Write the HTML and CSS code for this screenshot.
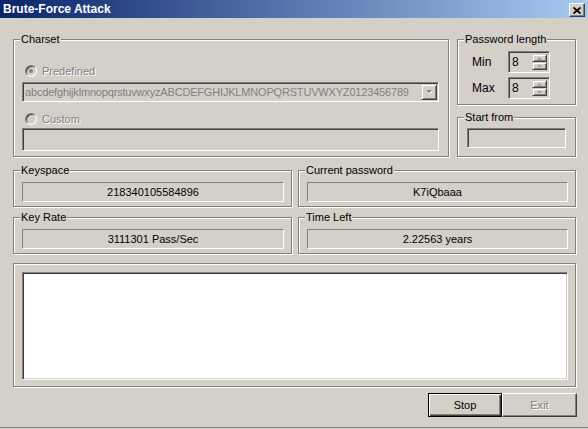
FILE: index.html
```html
<!DOCTYPE html>
<html lang="en">
<head>
  <meta charset="UTF-8" />
  <title>Brute-Force Attack</title>
  <link rel="stylesheet" href="styles.css">
</head>
<body>
  <div class="window">
    <div class="titlebar">
      <span class="title">Brute-Force Attack</span>
      <span class="close-btn">
        <svg width="8" height="7" viewBox="0 0 8 7"><path d="M0.5 0.5 L7.5 6.5 M7.5 0.5 L0.5 6.5" stroke="#000" stroke-width="1.8" fill="none"/></svg>
      </span>
    </div>

    <div class="content">
      <div class="top-row">
        <div class="group charset">
          <span class="legend">Charset</span>
          <div class="radio-row">
            <span class="radio checked"></span>
            <span class="off">Predefined</span>
          </div>
          <div class="combo">
            <span class="combo-text">abcdefghijklmnopqrstuvwxyzABCDEFGHIJKLMNOPQRSTUVWXYZ0123456789</span>
            <span class="drop-btn">
              <svg width="7" height="5" viewBox="0 0 7 5"><polygon points="1,1 7,1 4,4" fill="#fff"/><polygon points="0,0 6,0 3,3" fill="#808080"/></svg>
            </span>
          </div>
          <div class="radio-row second">
            <span class="radio"></span>
            <span class="off">Custom</span>
          </div>
          <div class="edit charset-edit"></div>
        </div>

        <div class="side">
          <div class="group pwlen">
            <span class="legend">Password length</span>
            <div class="spin-row">
              <span class="spin-label">Min</span>
              <div class="edit spin">
                <span class="spin-val">8</span>
                <span class="spin-btns">
                  <span class="spin-btn"><svg width="5" height="3" viewBox="0 0 5 3"><polygon points="2.5,0 5,3 0,3" fill="#a0a0a0"/></svg></span>
                  <span class="spin-btn"><svg width="5" height="3" viewBox="0 0 5 3"><polygon points="0,0 5,0 2.5,3" fill="#a0a0a0"/></svg></span>
                </span>
              </div>
            </div>
            <div class="spin-row">
              <span class="spin-label">Max</span>
              <div class="edit spin">
                <span class="spin-val">8</span>
                <span class="spin-btns">
                  <span class="spin-btn"><svg width="5" height="3" viewBox="0 0 5 3"><polygon points="2.5,0 5,3 0,3" fill="#a0a0a0"/></svg></span>
                  <span class="spin-btn"><svg width="5" height="3" viewBox="0 0 5 3"><polygon points="0,0 5,0 2.5,3" fill="#a0a0a0"/></svg></span>
                </span>
              </div>
            </div>
          </div>
          <div class="group start">
            <span class="legend">Start from</span>
            <div class="edit start-edit"></div>
          </div>
        </div>
      </div>

      <div class="stats">
        <div class="group stat">
          <span class="legend">Keyspace</span>
          <div class="static">218340105584896</div>
        </div>
        <div class="group stat">
          <span class="legend">Current password</span>
          <div class="static">K7iQbaaa</div>
        </div>
        <div class="group stat">
          <span class="legend">Key Rate</span>
          <div class="static">3111301 Pass/Sec</div>
        </div>
        <div class="group stat">
          <span class="legend">Time Left</span>
          <div class="static">2.22563 years</div>
        </div>
      </div>

      <div class="group log">
        <div class="listbox"></div>
      </div>

      <div class="buttons">
        <button class="btn default">Stop</button>
        <button class="btn" disabled>Exit</button>
      </div>
    </div>
  </div>
</body>
</html>
```

FILE: styles.css
```css
* { margin: 0; padding: 0; box-sizing: border-box; }
body {
  background: #d4d0c8;
  font-family: 'Liberation Sans', Arial, sans-serif;
  font-size: 11px;
  color: #000;
  width: 588px;
  height: 429px;
  overflow: hidden;
}
.window {
  height: 428px;
  border-bottom: 1px solid #808080;
}
.titlebar {
  height: 18px;
  background: linear-gradient(90deg, #0a246a, #a6caf0);
  display: flex;
  justify-content: space-between;
  align-items: flex-start;
  padding: 0 3px 0 3px;
}
.title {
  color: #fff;
  font-weight: bold;
  font-size: 12px;
  line-height: 18px;
}
.close-btn {
  width: 16px;
  height: 14px;
  margin-top: 3px;
  background: #d4d0c8;
  border: 1px solid;
  border-color: #fff #404040 #404040 #fff;
  box-shadow: inset -1px -1px 0 #808080;
  display: flex;
  align-items: center;
  justify-content: center;
}
.close-btn svg { display: block; }

.content { padding: 21px 12px 0 13px; }

/* etched group box */
.group {
  position: relative;
  border: 1px solid #808080;
  box-shadow: inset 1px 1px 0 #fff, 1px 1px 0 #fff;
}
.legend {
  position: absolute;
  top: -7px;
  left: 6px;
  line-height: 13px;
  padding: 0 1px;
  background: #d4d0c8;
  white-space: nowrap;
}

/* sunken 3d edit */
.edit {
  border: 1px solid;
  border-color: #808080 #fff #fff #808080;
  box-shadow: inset 1px 1px 0 #404040, inset -1px -1px 0 #d4d0c8;
  background: #d4d0c8;
}

.off {
  color: #808080;
  text-shadow: 1px 1px 0 #fff;
}

.top-row {
  display: flex;
  gap: 8px;
}
.charset {
  width: 436px;
  height: 118px;
  padding: 22px 9px 5px 8px;
}
.radio-row {
  height: 18px;
  display: flex;
  align-items: center;
  padding-left: 3px;
}
.radio-row.second { margin-top: 8px; }
.radio {
  width: 12px;
  height: 12px;
  border-radius: 50%;
  border: 1px solid;
  border-color: #808080 #fff #fff #808080;
  box-shadow: inset 1px 1px 0 #404040, inset -1px -1px 0 #d4d0c8;
  background: #d4d0c8;
  margin-right: 5px;
  display: flex;
  align-items: center;
  justify-content: center;
}
.radio.checked::after {
  content: "";
  width: 4px;
  height: 4px;
  border-radius: 50%;
  background: #808080;
}
.combo {
  margin-top: 2px;
  height: 20px;
  border: 1px solid;
  border-color: #808080 #fff #fff #808080;
  box-shadow: inset 1px 1px 0 #404040, inset -1px -1px 0 #d4d0c8;
  padding: 1px 1px 1px 2px;
  display: flex;
  align-items: center;
  justify-content: space-between;
}
.combo-text {
  color: #808080;
  line-height: 16px;
  letter-spacing: -0.18px;
  white-space: nowrap;
}
.drop-btn {
  width: 16px;
  height: 16px;
  border: 1px solid;
  border-color: #d4d0c8 #404040 #404040 #d4d0c8;
  box-shadow: inset 1px 1px 0 #fff, inset -1px -1px 0 #808080;
  display: flex;
  align-items: center;
  justify-content: center;
}
.drop-btn svg { display: block; }
.charset-edit { height: 23px; }

.side {
  width: 119px;
  display: flex;
  flex-direction: column;
  gap: 12px;
}
.pwlen {
  height: 66px;
  padding: 11px 0 5px 14px;
  display: flex;
  flex-direction: column;
  gap: 4px;
}
.spin-row {
  display: flex;
  align-items: center;
  height: 22px;
}
.spin-label { width: 36px; font-size: 12px; }
.spin {
  width: 42px;
  height: 22px;
  padding: 2px;
  display: flex;
  justify-content: space-between;
}
.spin-val {
  padding-left: 1px;
  line-height: 16px;
  font-size: 12px;
}
.spin-btns {
  width: 15px;
  display: flex;
  flex-direction: column;
}
.spin-btn {
  height: 9px;
  border: 1px solid;
  border-color: #d4d0c8 #404040 #404040 #d4d0c8;
  box-shadow: inset 1px 1px 0 #fff, inset -1px -1px 0 #808080;
  display: flex;
  align-items: center;
  justify-content: center;
}
.spin-btn svg { display: block; }

.start {
  height: 40px;
  padding: 10px 9px 8px 9px;
}
.start-edit { height: 20px; }

.stats {
  margin-top: 13px;
  display: grid;
  grid-template-columns: 279px 278px;
  column-gap: 6px;
  row-gap: 10px;
}
.stat {
  height: 37px;
  padding: 11px 7px 4px 8px;
}
.static {
  height: 20px;
  border: 1px solid;
  border-color: #808080 #fff #fff #808080;
  text-align: center;
  line-height: 18px;
}

.log {
  margin-top: 9px;
  height: 124px;
  padding: 8px 7px 6px 8px;
}
.listbox {
  height: 108px;
  background: #fff;
  border: 1px solid;
  border-color: #808080 #fff #fff #808080;
  box-shadow: inset 1px 1px 0 #404040, inset -1px -1px 0 #d4d0c8;
}

.buttons {
  margin-top: 6px;
  margin-right: -1px;
  display: flex;
  justify-content: flex-end;
}
.btn {
  width: 75px;
  height: 24px;
  font-family: 'Liberation Sans', Arial, sans-serif;
  font-size: 11px;
  color: #000;
  background: #d4d0c8;
  border: 1px solid;
  border-color: #fff #404040 #404040 #fff;
  box-shadow: inset -1px -1px 0 #808080;
}
.btn.default {
  width: 74px;
  border: 1px solid #000;
  box-shadow: inset 1px 1px 0 #fff, inset -1px -1px 0 #404040, inset -2px -2px 0 #808080;
}
.btn:disabled {
  color: #808080;
  text-shadow: 1px 1px 0 #fff;
}
```
